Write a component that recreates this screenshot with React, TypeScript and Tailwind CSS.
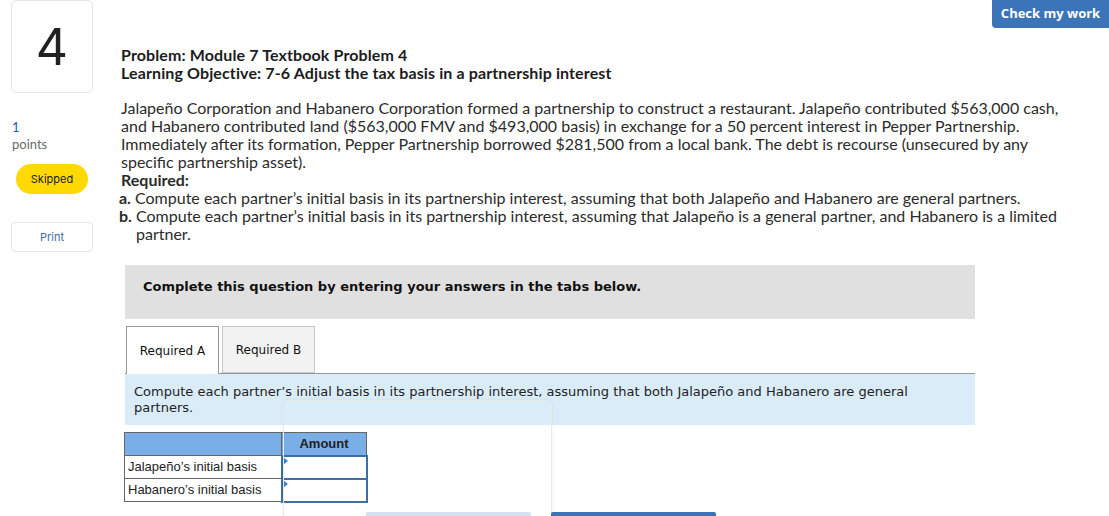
import type { ReactNode } from 'react'

const PROSE = "font-['Lato','Open_Sans',sans-serif]"
const VERDANA = "font-['DejaVu_Sans','Verdana',sans-serif]"

const BODY = [
  'Jalapeño Corporation and Habanero Corporation formed a partnership to construct a restaurant. Jalapeño contributed $563,000 cash,',
  'and Habanero contributed land ($563,000 FMV and $493,000 basis) in exchange for a 50 percent interest in Pepper Partnership.',
  'Immediately after its formation, Pepper Partnership borrowed $281,500 from a local bank. The debt is recourse (unsecured by any',
  'specific partnership asset).',
]

function Line({ children, className = '' }: { children: ReactNode; className?: string }) {
  return <div className={`whitespace-nowrap h-[18px] leading-[18px] ${className}`}>{children}</div>
}

function InputCell() {
  return (
    <td className="relative border-2 border-[#3d6ea5] p-0 h-[23px] w-[85px] bg-white">
      <span className="absolute left-0 top-0 w-0 h-0 border-t-[4px] border-b-[4px] border-l-[5px] border-t-transparent border-b-transparent border-l-[#3d7fd0]" />
    </td>
  )
}

export default function App() {
  return (
    <div className="relative w-[1109px] h-[516px] overflow-hidden bg-white text-[#222]">
      <button className="absolute right-0 top-0 w-[117px] h-[28px] bg-[#3b74b8] rounded-bl-[4px] text-white text-[13px] font-bold font-['Open_Sans',sans-serif]">
        Check my work
      </button>

      <div className="flex">
        {/* left rail */}
        <div className="w-[121px] shrink-0 pl-[11px]">
          <div className="w-[82px] h-[93px] border border-[#e6e6e6] rounded-[5px] flex items-center justify-center text-[50px] text-[#222] font-['Inter',sans-serif] font-normal leading-none">
            4
          </div>
          <div className={`${PROSE} mt-[26px] pl-px text-[13px] leading-[17px]`}>
            <div className="text-[#1a5bb5]">1</div>
            <div className="text-[#6b6b6b]">points</div>
          </div>
          <div className="mt-[11px] ml-[5px] w-[72px] h-[30px] rounded-full bg-[#ffd900] flex items-center justify-center text-[11px] text-[#222] font-['Inter',sans-serif]">
            Skipped
          </div>
          <div className="mt-[28px] w-[82px] h-[30px] border border-[#e6e6e6] rounded-[4px] flex items-center justify-center text-[11px] text-[#3d6ea5] font-['Inter',sans-serif]">
            Print
          </div>
        </div>

        {/* main */}
        <div className="flex-1 pt-[46px]">
          <div className={`${PROSE} font-bold text-[16px] tracking-[0.12px] leading-[18px] text-[#1c1c1c]`}>
            <div>Problem: Module 7 Textbook Problem 4</div>
            <div>Learning Objective: 7-6 Adjust the tax basis in a partnership interest</div>
          </div>

          <div className={`${PROSE} mt-[17px] text-[16px] text-[#2b2b2b]`}>
            {BODY.map(l => (
              <Line key={l}>{l}</Line>
            ))}
            <Line className="font-bold">Required:</Line>
            <Line className="-ml-[2px]">
              <span className="font-bold">a.</span> Compute each partner’s initial basis in its partnership interest, assuming that both Jalapeño and Habanero are general partners.
            </Line>
            <Line className="-ml-[2px]">
              <span className="font-bold">b.</span> Compute each partner’s initial basis in its partnership interest, assuming that Jalapeño is a general partner, and Habanero is a limited
            </Line>
            <Line className="pl-[15px]">partner.</Line>
          </div>

          <div className={`${VERDANA} ml-[4px] w-[850px] mt-[22px]`}>
            <div className="h-[54px] bg-[#e0e0e0] pl-[18px] pt-[14px] text-[13px] leading-[16px] font-bold text-[#111]">
              Complete this question by entering your answers in the tabs below.
            </div>

            <div className="mt-[7px] flex gap-[3px] pl-px relative z-10">
              <div className="w-[93px] h-[48px] bg-white border border-b-0 border-[#999] flex items-center justify-center text-[12px] text-[#111]">
                Required A
              </div>
              <div className="w-[93px] h-[47px] bg-[#f2f2f2] border border-[#c8c8c8] flex items-center justify-center text-[12px] text-[#111]">
                Required B
              </div>
            </div>

            <div className="-mt-px border-t border-[#999] bg-[#dbecf9] h-[52px] pl-[9px] pt-[10px] text-[13px] leading-[16px] text-[#222]">
              Compute each partner’s initial basis in its partnership interest, assuming that both Jalapeño and Habanero are general
              <br />
              partners.
            </div>

            <table className="mt-[7px] -ml-px border-collapse font-['Liberation_Sans',Arial,sans-serif] text-[13px] text-[#222]">
              <thead>
                <tr className="h-[23px] bg-[#7aaee6]">
                  <th className="w-[157px] border border-[#666]" />
                  <th className="w-[85px] border border-[#666] font-bold text-[13px] text-[#222]">Amount</th>
                </tr>
              </thead>
              <tbody>
                <tr>
                  <td className="border border-[#666] pl-[3px] h-[23px]">Jalapeño’s initial basis</td>
                  <InputCell />
                </tr>
                <tr>
                  <td className="border border-[#666] pl-[3px] h-[23px]">Habanero’s initial basis</td>
                  <InputCell />
                </tr>
              </tbody>
            </table>
          </div>
        </div>
      </div>

      {/* ghost overlay panel */}
      <div className="absolute left-[283px] top-[400px] w-[269px] h-[130px] rounded-t-[6px] border border-[#e9e9e9] shadow-[0_0_4px_rgba(0,0,0,0.06)] pointer-events-none" />

      <div className="absolute left-[366px] top-[512px] w-[165px] h-[4px] bg-[#d3e2f1] rounded-t-[2px]" />
      <div className="absolute left-[551px] top-[512px] w-[165px] h-[4px] bg-[#3b74b8] rounded-t-[2px]" />
    </div>
  )
}
